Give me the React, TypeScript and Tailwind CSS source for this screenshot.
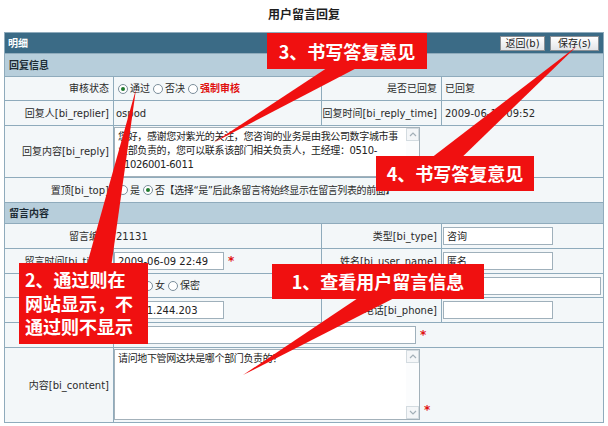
import React from "react";

const LINE = "border-[#8fabbc]";

function Radio({ checked }: { checked?: boolean }) {
  return (
    <span className="inline-flex w-[10px] h-[10px] rounded-full border border-[#7b8e9b] bg-white items-center justify-center mr-[1px] shrink-0">
      {checked && <span className="w-[4px] h-[4px] rounded-full bg-[#1f7a2e]" />}
    </span>
  );
}

function Input({ w, children }: { w: string; children?: React.ReactNode }) {
  return (
    <div className={`${w} h-[18px] border border-[#9fb0bb] bg-white px-[3px] flex items-center text-[10px] text-[#222] whitespace-nowrap overflow-hidden`}>
      {children}
    </div>
  );
}

function Star() {
  return <span className="text-[#e01010] text-[12px] font-bold ml-[4px] leading-none">*</span>;
}

function Chevron({ down }: { down?: boolean }) {
  return (
    <svg width="8" height="5" viewBox="0 0 8 5">
      <path d={down ? "M1 1 L4 4 L7 1" : "M1 4 L4 1 L7 4"} stroke="#a4b0b8" strokeWidth="1.2" fill="none" />
    </svg>
  );
}

function TextArea({ h, children }: { h: string; children?: React.ReactNode }) {
  return (
    <div className={`w-[306px] ${h} border border-[#a3b1ba] bg-white flex`}>
      <div className="flex-1 px-[3px] pt-[2px] text-[10px] leading-[14px] whitespace-nowrap overflow-hidden tracking-[-0.35px] text-[#222]">
        {children}
      </div>
      <div className="w-[13px] flex flex-col justify-between bg-[#fbfcfd]">
        <div className="h-[13px] border border-[#d3dbe0] bg-[#f4f6f8] flex items-center justify-center">
          <Chevron />
        </div>
        <div className="h-[13px] border border-[#d3dbe0] bg-[#f4f6f8] flex items-center justify-center">
          <Chevron down />
        </div>
      </div>
    </div>
  );
}

const L = "w-[108px] shrink-0 flex items-center justify-end pr-[4px] whitespace-nowrap";
const V2 = "w-[208px] shrink-0 border-l border-[#8fabbc] flex items-center";
const L3 = "w-[120px] shrink-0 border-l border-[#8fabbc] flex items-center justify-end pr-[4px] whitespace-nowrap";
const V4 = "flex-1 border-l border-[#8fabbc] flex items-center";
const SPAN = "flex-1 border-l border-[#8fabbc] flex items-center";

export default function App() {
  return (
    <div className="relative w-[608px] h-[426px] bg-white overflow-hidden [font-family:'DejaVu_Sans','Noto_Sans_CJK_SC',sans-serif] text-[10px] text-[#2a2a2a]">
      <div className="h-[28px] flex items-center justify-center text-[12px] font-bold text-[#1e1e1e] [font-family:'Noto_Sans_CJK_SC',sans-serif]">
        用户留言回复
      </div>
      <div className={`mt-[4px] ml-[4px] w-[600px] border ${LINE} bg-[#f3f7f9]`}>
        {/* header */}
        <div className="h-[20px] bg-[#3b6b86] flex items-center justify-between pl-[3px] pr-[4px]">
          <span className="text-white font-bold text-[10px]">明细</span>
          <div className="flex gap-[5px]">
            <div className="w-[45px] h-[15px] border border-[#8a8f94] bg-gradient-to-b from-white to-[#e2e5e8] flex items-center justify-center text-[10px] text-[#222]">
              返回(b)
            </div>
            <div className="w-[49px] h-[15px] border border-[#8a8f94] bg-gradient-to-b from-white to-[#e2e5e8] flex items-center justify-center text-[10px] text-[#222]">
              保存(s)
            </div>
          </div>
        </div>
        {/* section 回复信息 */}
        <div className={`h-[23px] border-t ${LINE} bg-[#b7cedb] flex items-center pl-[4px] font-bold text-[#1c2b34]`}>
          回复信息
        </div>
        {/* 审核状态 */}
        <div className={`h-[24px] border-t ${LINE} flex`}>
          <div className={L}>审核状态</div>
          <div className={`${V2} pl-[4px] gap-[1px]`}>
            <Radio checked />
            <span className="mr-[2px]">通过</span>
            <Radio />
            <span className="mr-[2px]">否决</span>
            <Radio />
            <span className="text-[#e01010] font-bold">强制审核</span>
          </div>
          <div className={L3}>是否已回复</div>
          <div className={`${V4} pl-[3px]`}>已回复</div>
        </div>
        {/* 回复人 */}
        <div className={`h-[25px] border-t ${LINE} flex`}>
          <div className={L}>回复人[bi_replier]</div>
          <div className={`${V2} pl-[2px]`}>ospod</div>
          <div className={L3}>回复时间[bi_reply_time]</div>
          <div className={`${V4} pl-[3px]`}>2009-06-16 09:52</div>
        </div>
        {/* 回复内容 */}
        <div className={`h-[52px] border-t ${LINE} flex`}>
          <div className={L}>回复内容[bi_reply]</div>
          <div className={`${SPAN} pl-[0px]`}>
            <TextArea h="h-[50px]">
              <div>您好，感谢您对紫光的关注，您咨询的业务是由我公司数字城市事</div>
              <div>业部负责的，您可以联系该部门相关负责人，王经理：0510-</div>
              <div>81026001-6011</div>
            </TextArea>
          </div>
        </div>
        {/* 置顶 */}
        <div className={`h-[25px] border-t ${LINE} flex`}>
          <div className={L}>置顶[bi_top]</div>
          <div className={`${SPAN} pl-[4px] gap-[1px] whitespace-nowrap`}>
            <Radio />
            <span className="mr-[2px]">是</span>
            <Radio checked />
            <span className="tracking-[-0.4px]">否【选择“是”后此条留言将始终显示在留言列表的前面】</span>
          </div>
        </div>
        {/* section 留言内容 */}
        <div className={`h-[21px] border-t ${LINE} bg-[#b7cedb] flex items-center pl-[4px] font-bold text-[#1c2b34]`}>
          留言内容
        </div>
        {/* 留言编号 */}
        <div className={`h-[25px] border-t ${LINE} flex`}>
          <div className={L}>留言编号</div>
          <div className={`${V2} pl-[2px]`}>21131</div>
          <div className={L3}>类型[bi_type]</div>
          <div className={`${V4} pl-[1px]`}>
            <Input w="w-[110px]">咨询</Input>
          </div>
        </div>
        {/* 留言时间 */}
        <div className={`h-[25px] border-t ${LINE} flex`}>
          <div className={L}>留言时间[bi_time]</div>
          <div className={`${V2} pl-[0px]`}>
            <Input w="w-[110px]">2009-06-09 22:49</Input>
            <Star />
          </div>
          <div className={L3}>姓名[bi_user_name]</div>
          <div className={`${V4} pl-[1px]`}>
            <Input w="w-[110px]">匿名</Input>
          </div>
        </div>
        {/* 性别 */}
        <div className={`h-[24px] border-t ${LINE} flex`}>
          <div className={L}>性别[bi_sex]</div>
          <div className={`${V2} pl-[4px] gap-[1px]`}>
            <Radio />
            <span className="mr-[2px]">男</span>
            <Radio />
            <span className="mr-[2px]">女</span>
            <Radio />
            <span>保密</span>
          </div>
          <div className={L3}>邮箱[bi_email]</div>
          <div className={`${V4} pl-[1px]`}>
            <Input w="w-[158px]" />
          </div>
        </div>
        {/* IP */}
        <div className={`h-[25px] border-t ${LINE} flex`}>
          <div className={L}>IP地址[bi_ip]</div>
          <div className={`${V2} pl-[0px]`}>
            <Input w="w-[110px]">218.91.244.203</Input>
          </div>
          <div className={L3}>电话[bi_phone]</div>
          <div className={`${V4} pl-[1px]`}>
            <Input w="w-[110px]" />
          </div>
        </div>
        {/* 标题 */}
        <div className={`h-[25px] border-t ${LINE} flex`}>
          <div className={L}>标题[bi_title]</div>
          <div className={`${SPAN} pl-[0px]`}>
            <Input w="w-[302px]" />
            <Star />
          </div>
        </div>
        {/* 内容 */}
        <div className={`h-[75px] border-t ${LINE} flex`}>
          <div className={L}>内容[bi_content]</div>
          <div className={`${SPAN} items-end pl-[0px] pb-[2px]`}>
            <TextArea h="h-[71px]">
              <div>请问地下管网这块是哪个部门负责的？</div>
            </TextArea>
            <span className="mb-[2px]">
              <Star />
            </span>
          </div>
        </div>
      </div>

      {/* annotation arrows */}
      <svg className="absolute left-0 top-0 pointer-events-none" width="608" height="426" viewBox="0 0 608 426">
        <polygon points="339,60 372,60 213,143" fill="#f01010" />
        <polygon points="422,165 454,165 577,46" fill="#f01010" />
        <polygon points="370,290 410,290 243,375" fill="#f01010" />
        <polygon points="84,275 110,275 136,89" fill="#f01010" />
      </svg>

      {/* callout boxes */}
      <div className="absolute left-[267px] top-[33px] w-[160px] h-[36px] bg-[#f01010] flex items-center justify-center text-white font-bold text-[18px] [font-family:'Noto_Sans_CJK_SC',sans-serif]">
        3、书写答复意见
      </div>
      <div className="absolute left-[376px] top-[156px] w-[158px] h-[35px] bg-[#f01010] flex items-center justify-center text-white font-bold text-[18px] [font-family:'Noto_Sans_CJK_SC',sans-serif]">
        4、书写答复意见
      </div>
      <div className="absolute left-[272px] top-[264px] w-[212px] h-[35px] bg-[#f01010] flex items-center justify-center text-white font-bold text-[18px] [font-family:'Noto_Sans_CJK_SC',sans-serif]">
        1、查看用户留言信息
      </div>
      <div className="absolute left-[19px] top-[263px] w-[129px] h-[81px] bg-[#f01010] flex flex-col justify-center pl-[6px] text-white font-bold text-[18px] leading-[23.5px] [font-family:'Noto_Sans_CJK_SC',sans-serif]">
        <div>2、通过则在</div>
        <div>网站显示，不</div>
        <div>通过则不显示</div>
      </div>
    </div>
  );
}
